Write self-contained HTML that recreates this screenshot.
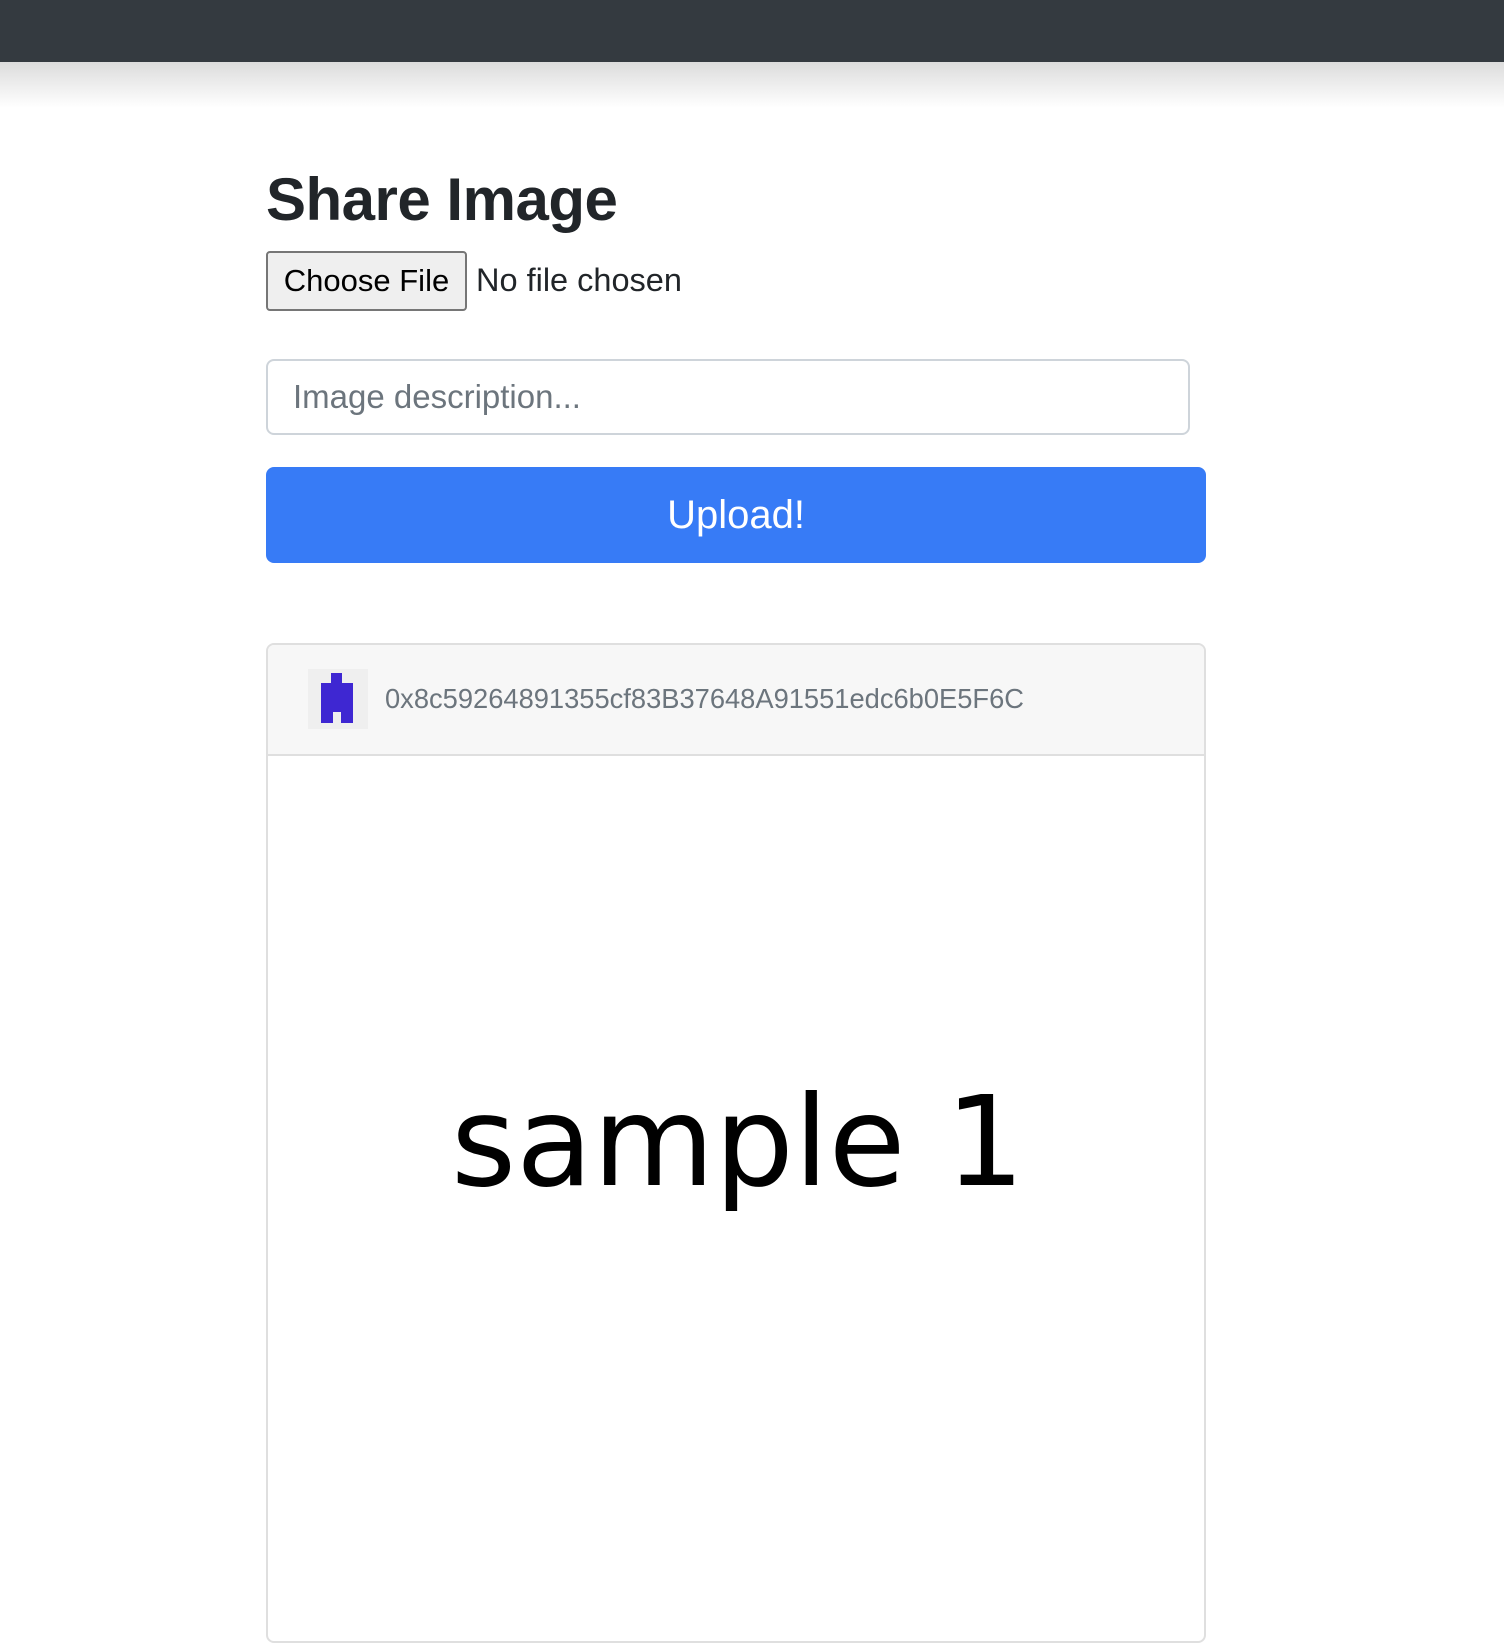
<!DOCTYPE html>
<html><head><meta charset="utf-8"><style>
*{box-sizing:border-box;margin:0;padding:0}
html,body{width:1504px;height:1568px;overflow:hidden;background:#fff;font-family:"Liberation Sans",sans-serif;}
.nav{position:absolute;left:0;top:0;width:1504px;height:62px;background:#343a40;}
.shadow{position:absolute;left:0;top:62px;width:1504px;height:46px;background:linear-gradient(#dcdcdc,#fff);}
h1{position:absolute;left:266px;top:165px;font-size:60px;font-weight:bold;color:#212529;letter-spacing:-0.5px;}
.fbtn{position:absolute;left:266px;top:251px;width:201px;height:60px;border:2px solid #767676;border-radius:4px;background:#efefef;font-size:31px;color:#000;text-align:center;line-height:56px;}
.ftxt{position:absolute;left:476px;top:262px;font-size:32.5px;color:#212529;}
.inp{position:absolute;left:266px;top:359px;width:924px;height:76px;border:2px solid #ced4da;border-radius:8px;padding-left:25px;font-size:33px;color:#6c757d;line-height:72px;}
.btn{position:absolute;left:266px;top:467px;width:940px;height:96px;background:#377bf6;border-radius:8px;color:#fff;font-size:40px;text-align:center;line-height:96px;}
.card{position:absolute;left:266px;top:643px;width:940px;height:1000px;border:2px solid #dfdfdf;border-radius:8px;}
.ch{height:111px;background:#f7f7f7;border-bottom:2px solid #dfdfdf;border-radius:6px 6px 0 0;position:relative;}
.id{position:absolute;left:40px;top:24px;width:60px;height:60px;background:#efefef;}
.addr{position:absolute;left:117px;top:38px;font-size:27.3px;color:#6c757d;}
.sample{position:absolute;left:451px;top:1070px;font-family:"DejaVu Sans",sans-serif;font-size:125px;color:#000;}
</style></head><body>
<div class="nav"></div><div class="shadow"></div>
<h1>Share Image</h1>
<div class="fbtn">Choose File</div>
<div class="ftxt">No file chosen</div>
<div class="inp">Image description...</div>
<div class="btn">Upload!</div>
<div class="card"><div class="ch">
<div class="id"><svg width="60" height="60" viewBox="0 0 60 60"><path d="M23 4H34V14H45V54H33V43H25V54H13V14H23Z" fill="#3e27d2"/></svg></div>
<div class="addr">0x8c59264891355cf83B37648A91551edc6b0E5F6C</div>
</div></div>
<div class="sample">sample 1</div>
</body></html>
